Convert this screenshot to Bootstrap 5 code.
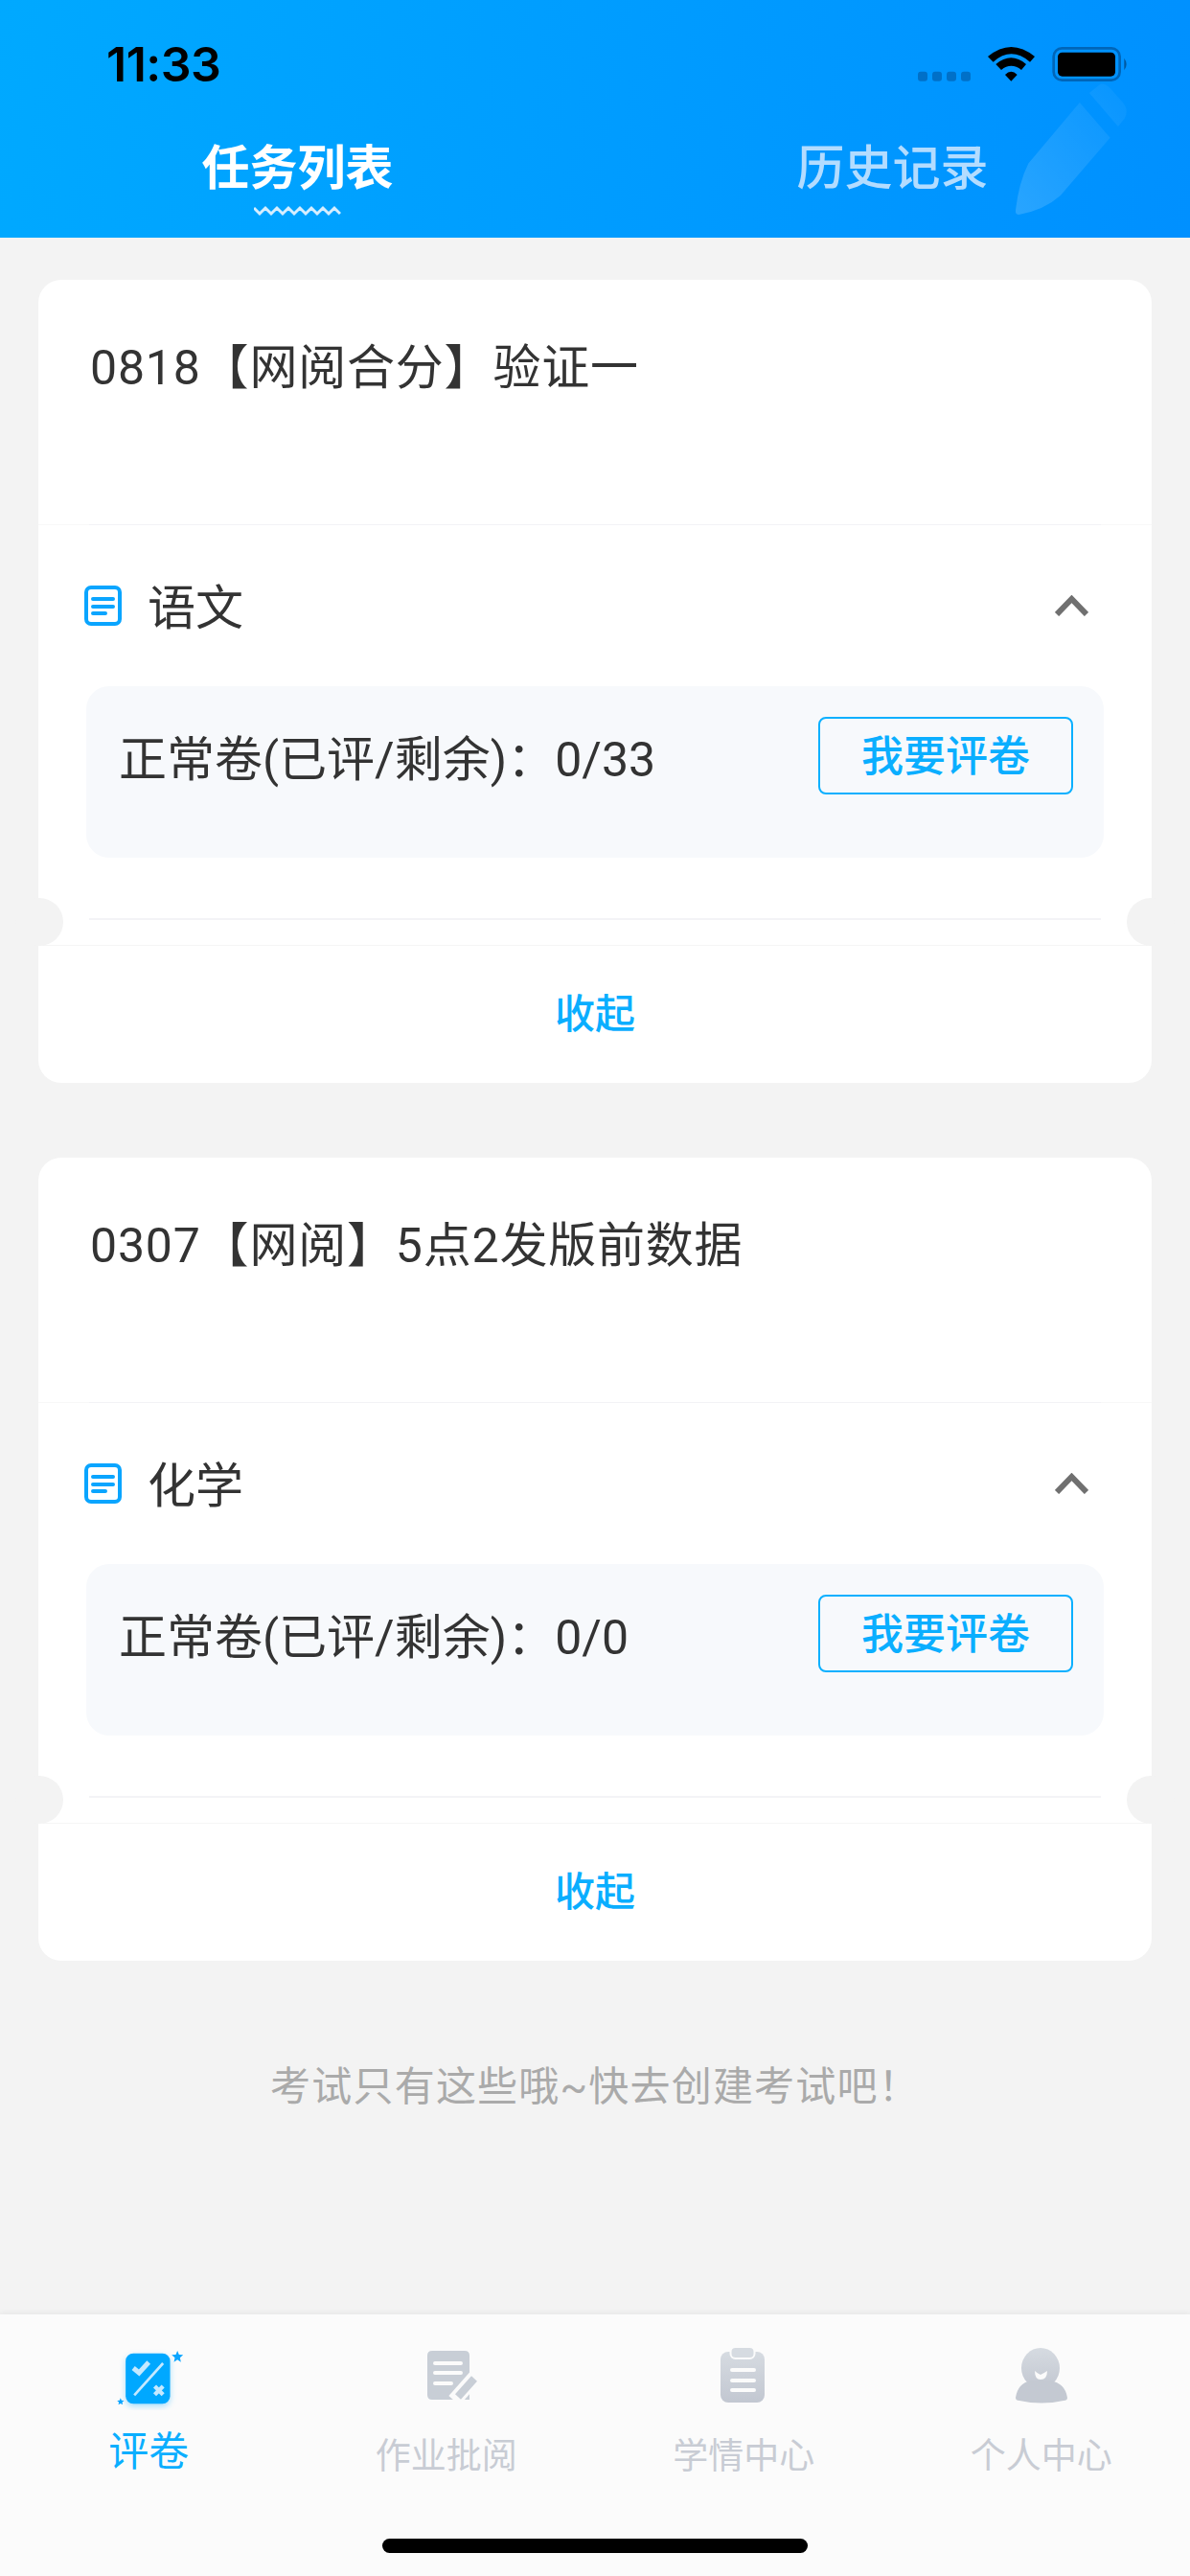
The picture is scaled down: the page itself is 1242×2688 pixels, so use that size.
<!DOCTYPE html>
<html lang="zh-CN">
<head>
    <meta charset="UTF-8">
    <meta name="viewport" content="width=device-width, initial-scale=1.0">
    <title>任务列表</title>
    <link href="https://cdn.jsdelivr.net/npm/bootstrap@5.3.0/dist/css/bootstrap.min.css" rel="stylesheet">
    <style>
        body {
            width: 1242px;
            height: 2688px;
            overflow: hidden;
            background: #f3f3f3;
            color: #333;
            font-family: Roboto, "Noto Sans CJK SC", sans-serif;
        }
        .app-shell { height: 2688px; }
        .top-head {
            height: 248px;
            background: linear-gradient(100deg, #00a9ff, #0090ff);
        }
        .status-row { height: 140px; padding: 44px 62px 0 111px; }
        .clock { font: 600 50px/46px Inter, "Liberation Sans", sans-serif; color: #000; letter-spacing: -.5px; }
        .pen-mark { position: absolute; left: 1060px; top: 87px; }
        .tab-side { width: 621px; padding-top: 6px; font-size: 50px; line-height: 60px; text-align: center; }
        .tab-on { color: #fff; font-weight: 700; }
        .tab-off { color: #b3dcff; font-weight: 500; }
        .tab-on span, .tab-off span { display: block; }
        .wave { display: block; margin: 8px auto 0; }
        .paper-list { padding: 44px 40px 0; gap: 78px; }
        .paper {
            height: 838px;
            border: 0;
            border-radius: 24px;
            background: #fff;
        }
        .paper-title { height: 256px; padding: 60px 54px 0; font-size: 50px; line-height: 64px; letter-spacing: .8px; border-bottom: 1px solid #f8f8f8; }
        .rule { height: 2px; margin: 0 53px; background: #f3f3f6; }
        .title-rule { margin-top: -1px; height: 1px; }
        .subject { height: 168px; padding: 0 66px 0 48px; }
        .subject-name { font-size: 50px; line-height: 64px; margin-left: 27px; padding-top: 6px; }
        .score-box {
            height: 179px;
            margin: 0 50px;
            padding: 32px 32px 0 34px;
            border-radius: 24px;
            background: #f7f9fc;
            font-size: 50px;
            line-height: 64px;
        }
        .score-text { margin-top: 13px; }
        .score-box .btn {
            width: 266px;
            height: 81px;
            padding: 2px 0 0;
            border: 2px solid #0ab0ff;
            border-radius: 8px;
            color: #0aaeff;
            background: transparent;
            font-size: 44px;
            line-height: 70px;
            font-weight: 500;
        }
        .collapse-row {
            height: 144px;
            margin-top: 26px;
            border-top: 1px solid #f5f5f5;
            color: #0aaeff;
            font-size: 42px;
            font-weight: 500;
        }
        .bite {
            position: absolute;
            top: 645px;
            width: 50px;
            height: 50px;
            border-radius: 50%;
            background: #f3f3f3;
        }
        .bite-l { left: -24px; }
        .bite-r { right: -24px; }
        .end-note { margin-top: 104px; font-size: 42px; line-height: 56px; letter-spacing: 1.2px; color: #aaa; text-align: center; }
        .bottom-bar {
            height: 273px;
            background: #fbfbfb;
            box-shadow: 0 -2px 6px rgba(0, 0, 0, .05);
        }
        .bar-item { width: 25%; height: 200px; padding-top: 33px; color: #c8ccd4; font-size: 37px; line-height: 44px; text-align: center; }
        .bar-item svg { display: block; margin: 0 auto; }
        .bar-item p { margin: 33px 0 0; }
        .bar-on { color: #0aaeff; font-size: 42px; }
        .bar-on p { margin-top: 22px; }
        .home-pill { width: 444px; height: 15px; margin: 34px auto 0; border-radius: 8px; background: #000; }
    </style>
</head>
<body>
<div class="app-shell d-flex flex-column position-relative">
    <header class="top-head position-relative">
        <div class="status-row d-flex justify-content-between">
            <div class="clock">11:33</div>
            <svg width="225" height="50" viewBox="45 40 675 150" style="margin-top:-1px">
                <g fill="#0070c8">
                    <rect x="54" y="135" width="30" height="30" rx="9"/>
                    <rect x="99" y="135" width="30" height="30" rx="9"/>
                    <rect x="144" y="135" width="30" height="30" rx="9"/>
                    <rect x="189" y="135" width="30" height="30" rx="9"/>
                </g>
                <path d="M273 88Q346 28 420 88L405 105Q346 55 290 105ZM298 112Q346 72 393 112L378 130Q346 105 315 130ZM327 145Q346 125 365 145L346 165Z" fill="#000"/>
                <rect x="479" y="62" width="207" height="100" rx="26" fill="none" stroke="#0065b8" stroke-width="8"/>
                <rect x="492" y="75" width="180" height="75" rx="14" fill="#000"/>
                <path d="M700 93Q714 112 700 131Z" fill="#00589f"/>
            </svg>
        </div>
        <div class="d-flex">
            <div class="tab-side tab-on">
                <span>任务列表</span>
                <svg class="wave" width="91" height="12" viewBox="0 0 91 12"><path d="M0 3l6 6 6-6 6 6 6-6 6 6 6-6 6 6 6-6 6 6 6-6 6 6 6-6 6 6 6-6 6 6" fill="none" stroke="#d6eeff" stroke-width="3"/></svg>
            </div>
            <div class="tab-side tab-off"><span>历史记录</span></div>
        </div>
        <svg class="pen-mark" width="117" height="137" viewBox="360 170 350 410">
            <defs><linearGradient id="penFade" x1="1" y1="0" x2="0" y2="1"><stop offset="0" stop-color="#fff" stop-opacity=".03"/><stop offset="1" stop-color="#fff" stop-opacity=".16"/></linearGradient></defs>
            <path d="M560 230L655 340L500 520Q450 565 370 580Q358 580 360 565Q370 480 400 420ZM590 200L625 172Q640 170 655 185L695 230Q715 255 700 280L680 305Z" fill="url(#penFade)"/>
        </svg>
    </header>

    <main class="paper-list d-flex flex-column">
        <section class="card paper position-relative">
            <div class="paper-title">0818【网阅合分】验证一</div>
            <div class="rule title-rule"></div>
            <div class="subject d-flex align-items-center">
                <svg width="39" height="42" viewBox="0 0 39 42"><rect x="2" y="2" width="35" height="38" rx="5" fill="#fff" stroke="#0aa5ff" stroke-width="4"/><path d="M9 14h21M9 22h21M9 29h13" stroke="#0aa5ff" stroke-width="4" stroke-linecap="round"/></svg>
                <div class="subject-name flex-grow-1">语文</div>
                <svg width="35" height="22" viewBox="0 0 35 22"><path d="M2 20L17.500 4L33 20" fill="none" stroke="#707070" stroke-width="6"/></svg>
            </div>
            <div class="score-box d-flex justify-content-between align-items-start">
                <div class="score-text">正常卷(已评/剩余)：0/33</div>
                <button class="btn" type="button">我要评卷</button>
            </div>
            <div class="rule" style="margin-top:63px"></div>
            <div class="collapse-row d-flex align-items-center justify-content-center">收起</div>
            <i class="bite bite-l"></i><i class="bite bite-r"></i>
        </section>

        <section class="card paper position-relative">
            <div class="paper-title">0307【网阅】5点2发版前数据</div>
            <div class="rule title-rule"></div>
            <div class="subject d-flex align-items-center">
                <svg width="39" height="42" viewBox="0 0 39 42"><rect x="2" y="2" width="35" height="38" rx="5" fill="#fff" stroke="#0aa5ff" stroke-width="4"/><path d="M9 14h21M9 22h21M9 29h13" stroke="#0aa5ff" stroke-width="4" stroke-linecap="round"/></svg>
                <div class="subject-name flex-grow-1">化学</div>
                <svg width="35" height="22" viewBox="0 0 35 22"><path d="M2 20L17.500 4L33 20" fill="none" stroke="#707070" stroke-width="6"/></svg>
            </div>
            <div class="score-box d-flex justify-content-between align-items-start">
                <div class="score-text">正常卷(已评/剩余)：0/0</div>
                <button class="btn" type="button">我要评卷</button>
            </div>
            <div class="rule" style="margin-top:63px"></div>
            <div class="collapse-row d-flex align-items-center justify-content-center">收起</div>
            <i class="bite bite-l"></i><i class="bite bite-r"></i>
        </section>
    </main>

    <div class="end-note">考试只有这些哦~快去创建考试吧！</div>

    <footer class="bottom-bar mt-auto">
        <div class="d-flex">
            <div class="bar-item bar-on">
                <svg width="77" height="70" viewBox="60 40 230 210" style="margin: -3px auto 0 120px">
                    <defs><filter id="blueGlow" x="-30%" y="-30%" width="160%" height="160%"><feDropShadow dx="0" dy="8" stdDeviation="10" flood-color="#0aa5ff" flood-opacity=".35"/></filter></defs>
                    <rect x="93" y="72" width="139" height="158" rx="24" fill="#00a8ff" filter="url(#blueGlow)"/>
                    <path d="M117 118L135 133L165 100" fill="none" stroke="#c5e9ff" stroke-width="15"/>
                    <path d="M120 203L210 103" stroke="#c5e9ff" stroke-width="8"/>
                    <path d="M184 175L210 201M210 175L184 201" stroke="#c5e9ff" stroke-width="13"/>
                    <path d="M255 64L260 76L273 77L263 86L266 99L255 92L244 99L247 86L237 77L250 76ZM77 212L80 219L88 220L82 225L84 233L77 229L70 233L72 225L66 220L74 219Z" fill="#0aa5ff"/>
                </svg>
                <p>评卷</p>
            </div>
            <div class="bar-item">
                <svg width="60" height="60" viewBox="440 2450 60 60" style="margin: 1px auto 0 130px">
                    <path d="M450 2454H484Q489 2454 489 2459V2505H450Q445 2505 445 2500V2459Q445 2454 450 2454Z" fill="#c8ced6"/>
                    <path d="M453 2467H480M453 2477H480M453 2488H470" stroke="#fbfbfb" stroke-width="4" stroke-linecap="round"/>
                    <path d="M496 2480L473 2506" stroke="#fbfbfb" stroke-width="15"/>
                    <path d="M494 2483L477 2502" stroke="#c8ced6" stroke-width="8"/>
                </svg>
                <p>作业批阅</p>
            </div>
            <div class="bar-item">
                <svg width="60" height="60" viewBox="745 2450 60 60" style="margin: 1px auto 0 124px">
                    <defs><linearGradient id="greyFade" x1="0" y1="0" x2="0" y2="1"><stop offset="0" stop-color="#d6dbe1"/><stop offset="1" stop-color="#c2c7d1"/></linearGradient></defs>
                    <rect x="752" y="2455" width="46" height="53" rx="8" fill="url(#greyFade)"/>
                    <rect x="762.500" y="2450" width="25" height="12" rx="5" fill="#d6dbe1" stroke="#fbfbfb" stroke-width="2"/>
                    <path d="M764 2474H787M764 2485H787M764 2495H787" stroke="#fbfbfb" stroke-width="4" stroke-linecap="round"/>
                </svg>
                <p>学情中心</p>
            </div>
            <div class="bar-item">
                <svg width="60" height="60" viewBox="1056 2450 60 60" style="margin: 1px auto 0 124px">
                    <ellipse cx="1086" cy="2472" rx="20" ry="21" fill="url(#greyFade)"/>
                    <path d="M1060 2503Q1062 2488 1076 2485H1096Q1112 2488 1114 2503Q1114 2506 1110 2506Q1087 2511 1064 2506Q1060 2506 1060 2503Z" fill="#c4c9d2"/>
                    <path d="M1080 2475Q1082 2477 1086 2479Q1090 2477 1093 2475Q1093 2484 1086 2484Q1080 2484 1080 2475Z" fill="#fbfbfb"/>
                </svg>
                <p>个人中心</p>
            </div>
        </div>
        <div class="home-pill"></div>
    </footer>
</div>
</body>
</html>
